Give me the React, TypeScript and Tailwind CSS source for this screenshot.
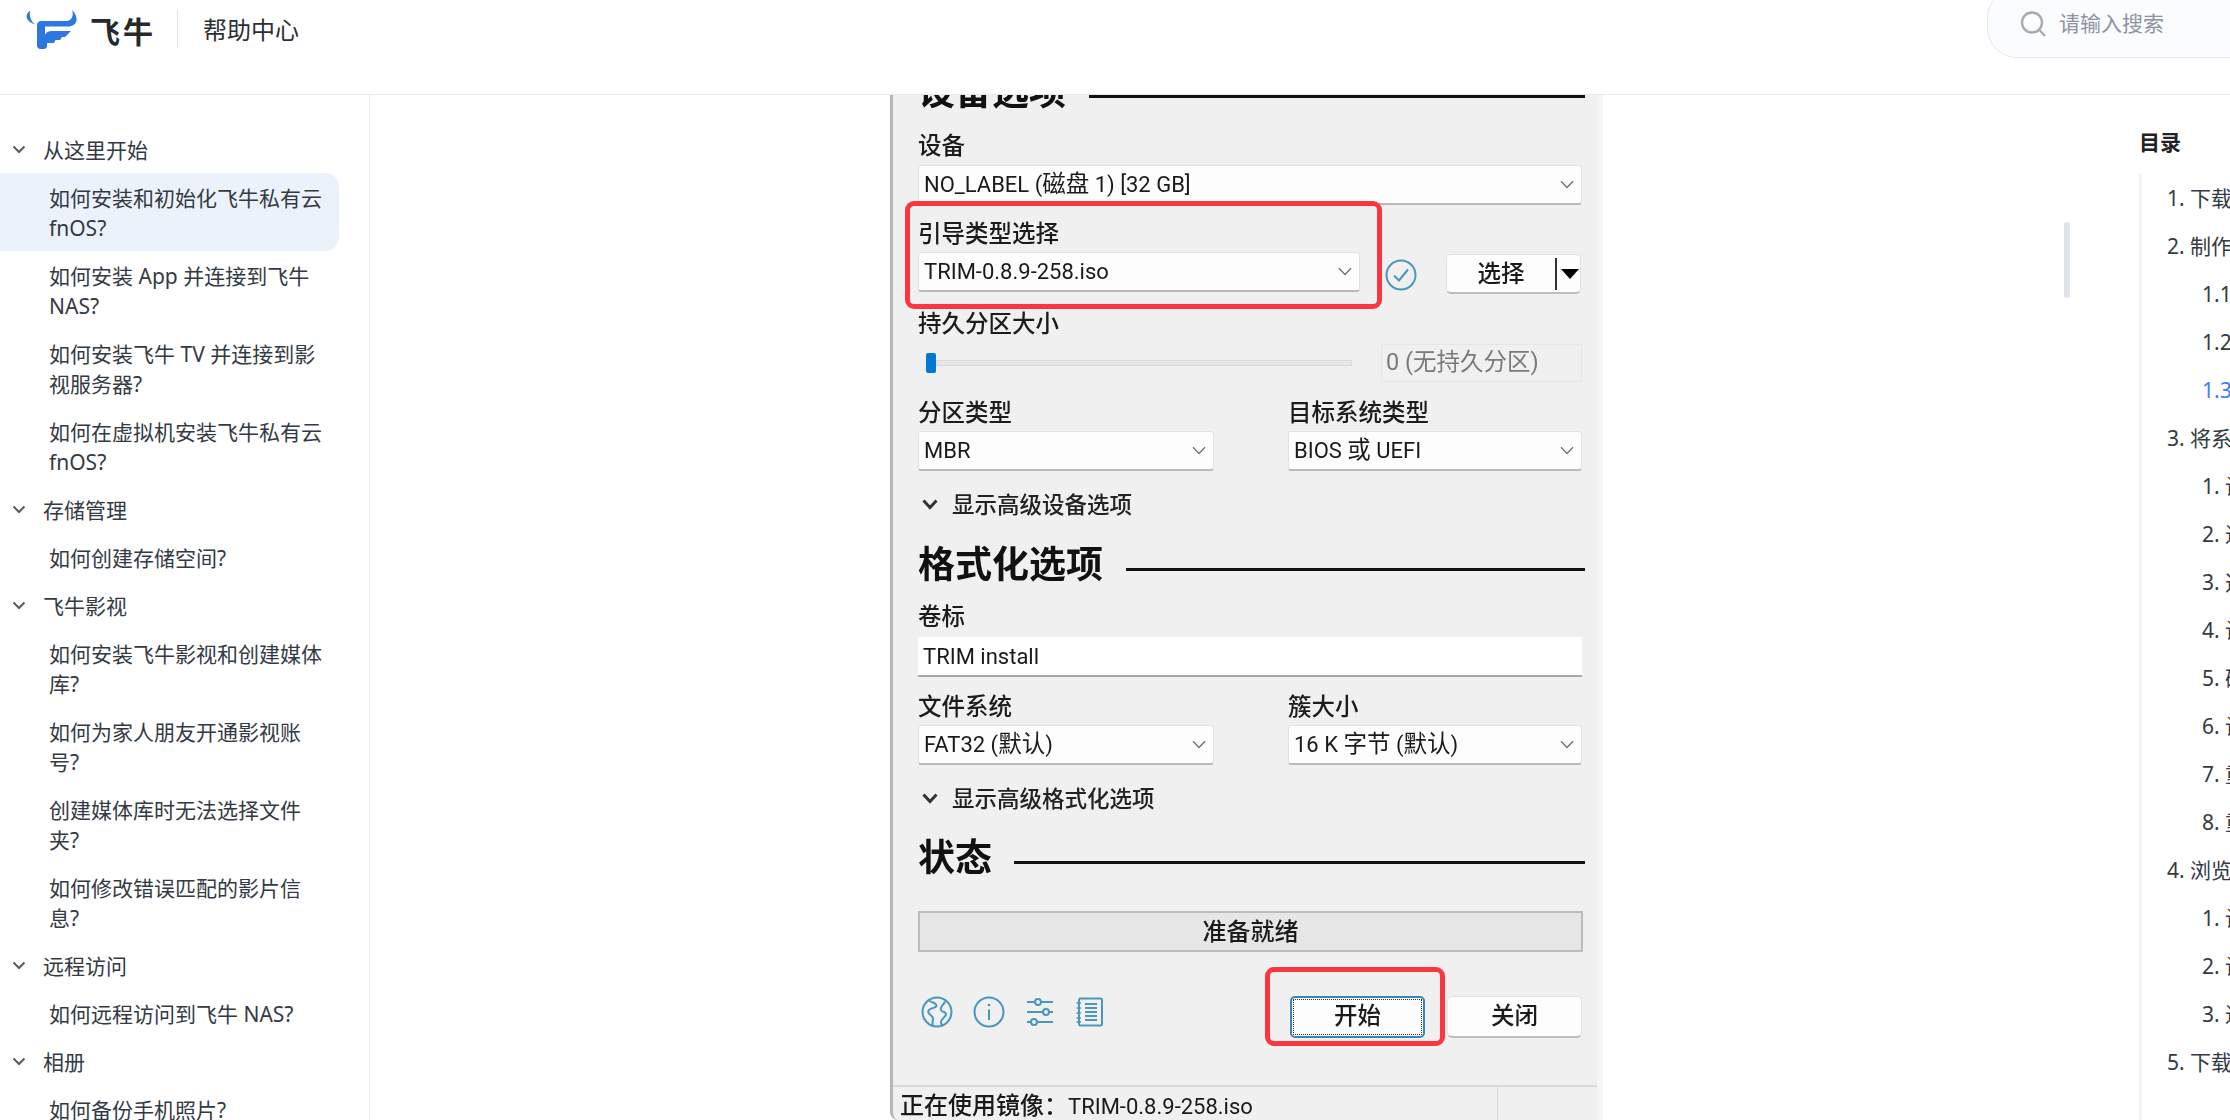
import React from "react";

const sidebar: { group: string; items: string[] }[] = [
  { group: "从这里开始", items: ["如何安装和初始化飞牛私有云 fnOS?", "如何安装 App 并连接到飞牛 NAS?", "如何安装飞牛 TV 并连接到影视服务器?", "如何在虚拟机安装飞牛私有云 fnOS?"] },
  { group: "存储管理", items: ["如何创建存储空间?"] },
  { group: "飞牛影视", items: ["如何安装飞牛影视和创建媒体库?", "如何为家人朋友开通影视账号?", "创建媒体库时无法选择文件夹?", "如何修改错误匹配的影片信息?"] },
  { group: "远程访问", items: ["如何远程访问到飞牛 NAS?"] },
  { group: "相册", items: ["如何备份手机照片?"] },
];

const toc: { t: string; sub?: boolean; active?: boolean }[] = [
  { t: "1. 下载系统镜像" },
  { t: "2. 制作启动盘" },
  { t: "1.1 下载工具", sub: true },
  { t: "1.2 插入U盘", sub: true },
  { t: "1.3 写入镜像", sub: true, active: true },
  { t: "3. 将系统安装到设备" },
  { t: "1. 设置启动项", sub: true },
  { t: "2. 进入安装界面", sub: true },
  { t: "3. 选择系统盘", sub: true },
  { t: "4. 设置分区", sub: true },
  { t: "5. 确认安装", sub: true },
  { t: "6. 设置网络", sub: true },
  { t: "7. 重启设备", sub: true },
  { t: "8. 重新连接", sub: true },
  { t: "4. 浏览器访问设备" },
  { t: "1. 设置账号", sub: true },
  { t: "2. 设置存储", sub: true },
  { t: "3. 进入桌面", sub: true },
  { t: "5. 下载客户端" },
];

function Logo() {
  return (
    <svg viewBox="24 8 56 44" className="w-[56px] h-[44px] shrink-0 mt-[8px]" fill="#2f77e0">
      <path d="M30 10.5C25 14 24.5 21 35 24.5C31.5 21.5 29 17 30 10.5Z" />
      <path d="M72 10C74 15 72 21 66 21H41C38.5 21 37 23 37 25V45.5C37 47.5 38.5 49 40.5 49H44C46 49 47 47.5 47 45.5V43H54L55.5 40H60L62 37H65L71 31H52C48.5 31 46 32.5 45 35V26.5H68C77 26.5 80 18 72 10Z" />
    </svg>
  );
}

function SideChevron() {
  return (
    <svg width="14" height="9" viewBox="0 0 14 9" fill="none" stroke="#555b66" strokeWidth="2" className="shrink-0">
      <path d="M1.5 1.5L7 7L12.5 1.5" />
    </svg>
  );
}

function C({ children }: { children: React.ReactNode }) {
  return <span className="text-[23.5px]">{children}</span>;
}

function SelectBox({ children, className }: { children: React.ReactNode; className: string }) {
  return (
    <div className={`h-[40px] flex items-center justify-between pl-[5px] pr-[7px] bg-[#fdfdfd] border border-[#e2e2e2] border-b-[2px] border-b-[#b9b9b9] rounded-[3px] text-[22px] text-[#1a1a1a] ${className}`}>
      <span className="whitespace-nowrap">{children}</span>
      <svg width="14" height="9" viewBox="0 0 14 9" fill="none" stroke="#707070" strokeWidth="1.3" className="shrink-0">
        <path d="M1 1.2L7 7.5L13 1.2" />
      </svg>
    </div>
  );
}

function Label({ children, className = "" }: { children: React.ReactNode; className?: string }) {
  return <div className={`h-[30px] flex items-center text-[23.5px] font-medium text-[#1c1c1c] ${className}`}>{children}</div>;
}

function Heading({ text, lineWidth, className = "" }: { text: string; lineWidth: string; className?: string }) {
  return (
    <div className={`h-[44px] flex items-center justify-between ${className}`}>
      <span className="text-[37px] font-bold leading-none text-[#111] whitespace-nowrap">{text}</span>
      <div className={`h-[3px] mt-[9px] bg-[#111] ${lineWidth}`} />
    </div>
  );
}

function Advanced({ text, className = "" }: { text: string; className?: string }) {
  return (
    <div className={`h-[30px] flex items-center pl-[4px] text-[22.5px] font-medium text-[#222] ${className}`}>
      <svg width="16" height="11" viewBox="0 0 16 11" fill="none" stroke="#333" strokeWidth="3" className="shrink-0 mr-[14px] mb-[3px]">
        <path d="M1.5 1.5L8 8.5L14.5 1.5" />
      </svg>
      <span className="whitespace-nowrap">{text}</span>
    </div>
  );
}

const iconStroke = "#4a97bd";

function GlobeIcon() {
  return (
    <svg width="32" height="32" viewBox="0 0 32 32" fill="none" stroke={iconStroke} strokeWidth="2">
      <circle cx="16" cy="16" r="14.5" />
      <path d="M8 4.5C11 7 15 6.5 15.5 9.5C16 12 10.5 11.5 8 14C5.5 16.5 9.5 19 11.5 21C13 23 10.5 26 12 29.5" />
      <path d="M24 5.5C22.5 9 18.5 11 20 14C21 16.5 24 15 25 18C25.5 21 20 22 20 26C20 28 21 29 22 29" />
    </svg>
  );
}

function InfoIcon() {
  return (
    <svg width="32" height="32" viewBox="0 0 32 32" fill="none" stroke={iconStroke} strokeWidth="2">
      <circle cx="16" cy="16" r="14.5" />
      <path d="M16 13.5V24" />
      <circle cx="16" cy="9" r="1.3" fill={iconStroke} stroke="none" />
    </svg>
  );
}

function SlidersIcon() {
  return (
    <svg width="30" height="30" viewBox="0 0 30 30" fill="none" stroke={iconStroke} strokeWidth="2">
      <path d="M2 5H10M16 5H28M2 15H18M24 15H28M2 25H6M12 25H28" />
      <circle cx="13" cy="5" r="3" />
      <circle cx="21" cy="15" r="3" />
      <circle cx="9" cy="25" r="3" />
    </svg>
  );
}

function NotebookIcon() {
  return (
    <svg width="30" height="30" viewBox="0 0 30 30" fill="none" stroke={iconStroke} strokeWidth="2">
      <rect x="4" y="1.5" width="23" height="27" rx="1.5" />
      <path d="M10 7H22M10 11H22M10 15H22M10 19H22M10 23H22" />
      <path d="M1.5 6H6M1.5 11H6M1.5 16H6M1.5 21H6M1.5 25H6" strokeWidth="1.5" />
    </svg>
  );
}

export default function App() {
  const base = "font-['Noto_Sans','Noto_Sans_CJK_SC',sans-serif]";
  return (
    <div className={`w-[2230px] h-[1120px] overflow-hidden bg-white flex flex-col text-[#333a44] ${base}`}>
      <header className="h-[95px] shrink-0 border-b border-[#e5e9f0] flex items-start pl-[24px]">
        <Logo />
        <span className="ml-[10px] mt-[12px] text-[30px] leading-[40px] font-bold tracking-[3px] text-[#26282c] w-[66px] whitespace-nowrap">飞牛</span>
        <div className="ml-[21px] mt-[9px] w-px h-[39px] bg-[#e0e3e8]" />
        <span className="ml-[25px] mt-[12px] text-[24px] leading-[36px] text-[#2b2f36] whitespace-nowrap">帮助中心</span>
        <div className="ml-auto -mr-[57px] -mt-[12px] w-[300px] h-[70px] shrink-0 rounded-[30px] border border-[#e6e8f0] bg-[#fbfcfe] flex items-center pl-[32px] pt-[1px]">
          <svg width="26" height="26" viewBox="0 0 26 26" fill="none" stroke="#a9abb0" strokeWidth="2.4" className="shrink-0">
            <circle cx="12" cy="11.5" r="10" />
            <path d="M19.5 19L25 25" />
          </svg>
          <span className="ml-[13px] text-[21px] text-[#8d93a1] whitespace-nowrap">请输入搜索</span>
        </div>
      </header>

      <div className="flex-1 min-h-0 flex">
        <aside className="w-[370px] shrink-0 border-r border-[#e5e9f0] pt-[30px] text-[21px] overflow-hidden">
          {sidebar.map((s) => (
            <div key={s.group}>
              <div className="h-[48px] flex items-center pl-[12px]">
                <SideChevron />
                <span className="ml-[17px] pt-[2px] leading-[30px]">{s.group}</span>
              </div>
              {s.items.map((it, i) => (
                <div
                  key={it}
                  className={`mr-[30px] pl-[49px] pr-[13px] pt-[10px] pb-[8px] leading-[30px] rounded-r-[14px] ${s.group === "从这里开始" && i === 0 ? "bg-[#ecf2fb]" : ""}`}
                >
                  {it}
                </div>
              ))}
            </div>
          ))}
        </aside>

        <main className="relative w-[1769px] shrink-0 overflow-hidden">
          <div className="relative ml-[520px] w-[713px] h-full overflow-hidden bg-[#f0f0f0] border-l-[3px] border-l-[#b7b7b7] border-r-[6px] border-r-[#f4f5f8] rounded-bl-[8px] font-['Roboto','Noto_Sans_CJK_SC',sans-serif]">
            <div className="blur-[0.4px]">
              <div className="pl-[25px] -mt-[25px] w-[692px]">
                <Heading text="设备选项" lineWidth="w-[496px]" />
                <Label className="mt-[18px]">设备</Label>
                <SelectBox className="mt-[3px] w-[664px]">NO_LABEL (<C>磁盘</C> 1) [32 GB]</SelectBox>
                <Label className="mt-[15px]">引导类型选择</Label>
                <div className="mt-[2px] flex items-start w-[664px]">
                  <SelectBox className="w-[442px]">TRIM-0.8.9-258.iso</SelectBox>
                  <svg width="32" height="32" viewBox="0 0 32 32" fill="none" stroke={iconStroke} strokeWidth="2" className="ml-[25px] mt-[7px] shrink-0">
                    <circle cx="16" cy="16" r="14.5" />
                    <path d="M9 16.5L14 21.5L23 10.5" />
                  </svg>
                  <div className="ml-[29px] mt-[2px] w-[135px] h-[40px] shrink-0 flex items-center bg-[#fdfdfd] border border-[#e2e2e2] border-b-[2px] border-b-[#bdbdbd] rounded-[5px]">
                    <span className="w-[108px] pt-[2px] text-center text-[23.5px] font-medium text-[#1a1a1a]">选择</span>
                    <div className="w-[2px] h-[32px] bg-[#333]" />
                    <div className="ml-[4px] w-0 h-0 border-l-[9px] border-r-[9px] border-t-[10px] border-l-transparent border-r-transparent border-t-black" />
                  </div>
                </div>
                <Label className="mt-[16px]">持久分区大小</Label>
                <div className="mt-[4px] flex items-center w-[664px]">
                  <div className="ml-[8px] w-[10px] h-[20px] bg-[#0078d4] rounded-[2px] shrink-0" />
                  <div className="w-[416px] h-[6px] bg-[#e6e6e6] border border-[#dadada] shrink-0" />
                  <div className="ml-[29px] w-[201px] h-[38px] border border-[#e6e6e6] flex items-center pl-[4px] text-[23.5px] text-[#7a7a7a] whitespace-nowrap">0 (无持久分区)</div>
                </div>
                <div className="mt-[17px] flex gap-[74px] w-[664px]">
                  <div className="w-[296px]">
                    <Label>分区类型</Label>
                    <SelectBox className="mt-[2px] w-[296px]">MBR</SelectBox>
                  </div>
                  <div className="w-[294px]">
                    <Label>目标系统类型</Label>
                    <SelectBox className="mt-[2px] w-[294px]">BIOS <C>或</C> UEFI</SelectBox>
                  </div>
                </div>
                <Advanced text="显示高级设备选项" className="mt-[20px]" />
                <Heading text="格式化选项" lineWidth="w-[459px]" className="mt-[22px]" />
                <Label className="mt-[16px]">卷标</Label>
                <div className="mt-[4px] w-[664px] h-[40px] bg-white border-b-[2px] border-b-[#a8a8a8] flex items-center pl-[5px] text-[22px] text-[#1a1a1a]">TRIM install</div>
                <div className="mt-[16px] flex gap-[74px] w-[664px]">
                  <div className="w-[296px]">
                    <Label>文件系统</Label>
                    <SelectBox className="mt-[2px] w-[296px]">FAT32 (<C>默认</C>)</SelectBox>
                  </div>
                  <div className="w-[294px]">
                    <Label>簇大小</Label>
                    <SelectBox className="mt-[2px] w-[294px]">16 K <C>字节</C> (<C>默认</C>)</SelectBox>
                  </div>
                </div>
                <Advanced text="显示高级格式化选项" className="mt-[20px]" />
                <Heading text="状态" lineWidth="w-[571px]" className="mt-[21px]" />
                <div className="mt-[31px] w-[665px] h-[41px] bg-[#e6e6e6] border-2 border-[#bcbcbc] flex items-center justify-center text-[24px] font-medium text-[#1a1a1a]">准备就绪</div>
                <div className="mt-[44px] h-[42px] flex items-start w-[664px]">
                  <div className="ml-[3px] flex items-center gap-[20px]">
                    <GlobeIcon />
                    <InfoIcon />
                    <SlidersIcon />
                    <NotebookIcon />
                  </div>
                  <div className="ml-auto flex">
                    <div className="w-[135px] h-[42px] rounded-[5px] border-2 border-[#3a86b8] bg-[#fdfdfd] p-[1px]">
                      <div className="w-full h-full border border-dotted border-[#333] flex items-center justify-center text-[23.5px] font-medium text-[#1a1a1a]">开始</div>
                    </div>
                    <div className="ml-[22px] w-[135px] h-[42px] rounded-[5px] bg-[#fdfdfd] border border-[#e2e2e2] border-b-[2px] border-b-[#bdbdbd] flex items-center justify-center text-[23.5px] font-medium text-[#1a1a1a]">关闭</div>
                  </div>
                </div>
              </div>
              <div className="mt-[47px] border-t-[2px] border-[#d9d9d9] h-[40px] flex">
                <div className="w-[605px] pl-[7px] border-r border-[#d9d9d9] flex items-center text-[22px] text-[#1a1a1a] whitespace-nowrap">
                  <span className="text-[24px] font-medium">正在使用镜像：</span>TRIM-0.8.9-258.iso
                </div>
              </div>
            </div>
            <div className="absolute left-[12px] top-[106px] w-[477px] h-[108px] border-[5px] border-[#fb3640] rounded-[9px]" />
            <div className="absolute left-[372px] top-[872px] w-[180px] h-[79px] border-[5px] border-[#fb3640] rounded-[9px]" />
          </div>
          <div className="absolute left-[1694px] top-[127px] w-[6px] h-[76px] rounded-full bg-[#e0e3ec]" />
        </main>

        <aside className="w-[300px] shrink-0 text-[21px] text-[#333a44] overflow-hidden">
          <div className="pt-[32px] h-[78px] font-bold text-[#222] leading-[30px]">目录</div>
          <div className="border-l-[3px] border-[#f3f4f6] h-full pt-[2px]">
            {toc.map((r) => (
              <div
                key={r.t}
                className={`h-[48px] flex items-center whitespace-nowrap ${r.sub ? "pl-[60px]" : "pl-[25px]"} ${r.active ? "text-[#3b82f6]" : ""}`}
              >
                {r.t}
              </div>
            ))}
          </div>
        </aside>
      </div>
    </div>
  );
}
